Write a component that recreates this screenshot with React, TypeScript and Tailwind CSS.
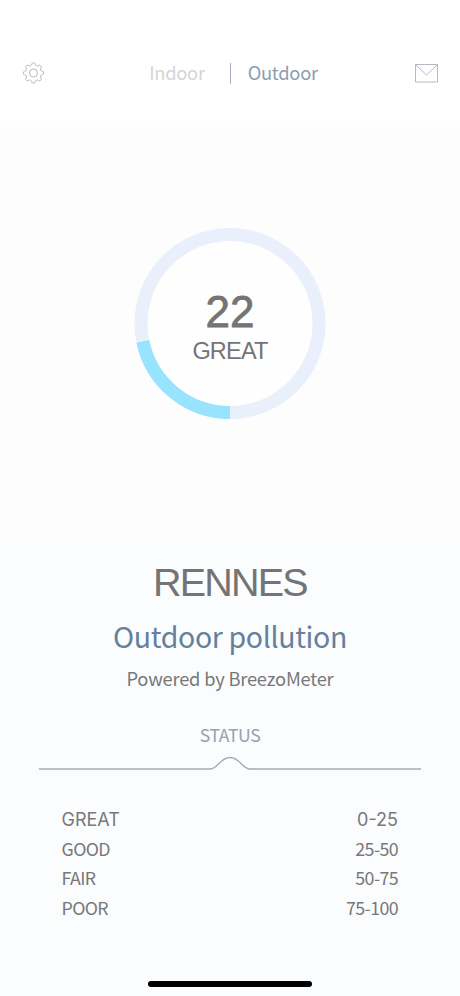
import React from 'react';

const LEVELS = [
    { name: 'GREAT', range: '0-25' },
    { name: 'GOOD', range: '25-50' },
    { name: 'FAIR', range: '50-75' },
    { name: 'POOR', range: '75-100' },
];

const SCORE = 22;
const RADIUS = 89;
const LENGTH = 2 * Math.PI * RADIUS;

// Gear outline: eight rounded teeth joined by concave arcs
const gearPath = () => {
    const point = (r: number, deg: number) => {
        const a = (deg * Math.PI) / 180;
        return `${(10.5 + r * Math.cos(a)).toFixed(2)} ${(11 + r * Math.sin(a)).toFixed(2)}`;
    };
    let d = '';
    for (let i = 0; i < 8; i++) {
        const a = i * 45;
        d += `${i === 0 ? 'M' : 'L'}${point(9.2, a - 10)}`;
        d += `Q${point(10.5, a - 8)} ${point(10.2, a)}`;
        d += `Q${point(10.5, a + 8)} ${point(9.2, a + 10)}`;
        d += `C${point(7.5, a + 13)} ${point(7.5, a + 32)} ${point(9.2, a + 35)}`;
    }
    return d + 'Z';
};

const Header = () => (
    <header className="flex h-[127px] items-start justify-between bg-white pt-[62px] pl-[23px] pr-[22px]">
        <button className="w-[22px]">
            <svg width="22" height="22" viewBox="0 0 22 22" fill="none" stroke="#b3bac3" strokeWidth="1">
                <path d={gearPath()} />
                <circle cx="10.5" cy="11" r="4" />
            </svg>
        </button>
        <nav className="flex h-[22px] items-center pl-[8px] text-[18.3px] leading-[22px] tracking-[-0.25px]">
            <button className="-mt-[2px] w-[80.5px] text-left text-[#d3d5d7]">Indoor</button>
            <span className="h-[21px] w-px bg-[#a3adb8]" />
            <button className="-mt-[2px] ml-[17px] text-[#8c9dae]">Outdoor</button>
        </nav>
        <button className="w-[24px]">
            <svg width="24" height="22" viewBox="0 0 24 22" fill="none" stroke="#b3bac3" strokeWidth="1">
                <path d="M1.5 2.5h22v17.5h-22zM1.5 2.5l11 10.5 11-10.5" />
            </svg>
        </button>
    </header>
);

const Gauge = () => (
    <div className="relative mx-auto mt-[100px] h-[192px] w-[192px]">
        <svg width="192" height="192" viewBox="0 0 192 192" fill="none" strokeWidth="13">
            <circle cx="96" cy="96.5" r={RADIUS} fill="#fefefe" stroke="#e9effb" />
            <circle
                cx="96"
                cy="96.5"
                r={RADIUS}
                stroke="#98e3fd"
                strokeDasharray={`${(LENGTH * SCORE) / 100 - 1.5} ${LENGTH}`}
                transform="rotate(90 96 96.5)"
            />
        </svg>
        <div className="absolute inset-0 flex flex-col items-center pt-[63px] font-['Liberation_Sans',sans-serif] text-[#747474]">
            <span className="text-[44px] leading-[44px] [-webkit-text-stroke:0.8px_#747474]">{SCORE}</span>
            <span className="mt-[4px] text-[23.5px] leading-[26px] tracking-[-0.8px]">GREAT</span>
        </div>
    </div>
);

const App = () => {
    return (
        <div className="flex h-[996px] w-[460px] flex-col overflow-hidden bg-linear-to-b from-[#fdfdfd] from-50% to-[#fafcfe] to-60% font-['Noto_Sans_CJK_SC',sans-serif]">
            <Header />
            <Gauge />

            <section className="mt-[139px] flex flex-col items-center">
                <h1 className="font-['Liberation_Sans',sans-serif] text-[39.5px] leading-[48px] tracking-[-1.8px] text-[#747474]">RENNES</h1>
                <h2 className="mt-[10px] text-[28.5px] leading-[40px] tracking-[-0.35px] text-[#64809c]">Outdoor pollution</h2>
                <p className="mt-[8px] text-[18.3px] leading-[28px] tracking-[-0.2px] text-[#787878]">Powered by BreezoMeter</p>
            </section>

            <section className="mt-[31px] flex flex-col items-center">
                <h3 className="text-[17.6px] leading-[24px] tracking-[-0.4px] text-[#98a2ac]">STATUS</h3>
                <svg className="mt-[8px]" width="382" height="16" viewBox="0 0 382 16" fill="none" stroke="#a5acb2" strokeWidth="1.3">
                    <path d="M0 14H171C179 14 181 2.5 191 2.5S203 14 211 14H382" />
                </svg>
            </section>

            <ul className="mt-[34px] pl-[61.5px] pr-[62px] text-[17.8px] leading-[29.6px] tracking-[-0.6px] text-[#787878]">
                {LEVELS.map((level, i) => (
                    <li
                        key={level.name}
                        className={`flex justify-between ${i === 0 ? "-mb-px font-['Inter',sans-serif] text-[18px] tracking-normal" : ''}`}
                    >
                        <span>{level.name}</span>
                        <span>{level.range}</span>
                    </li>
                ))}
            </ul>

            {/* Home indicator */}
            <div className="mx-auto mt-auto mb-[9px] h-[6px] w-[164px] rounded-full bg-black" />
        </div>
    );
};

export default App;
